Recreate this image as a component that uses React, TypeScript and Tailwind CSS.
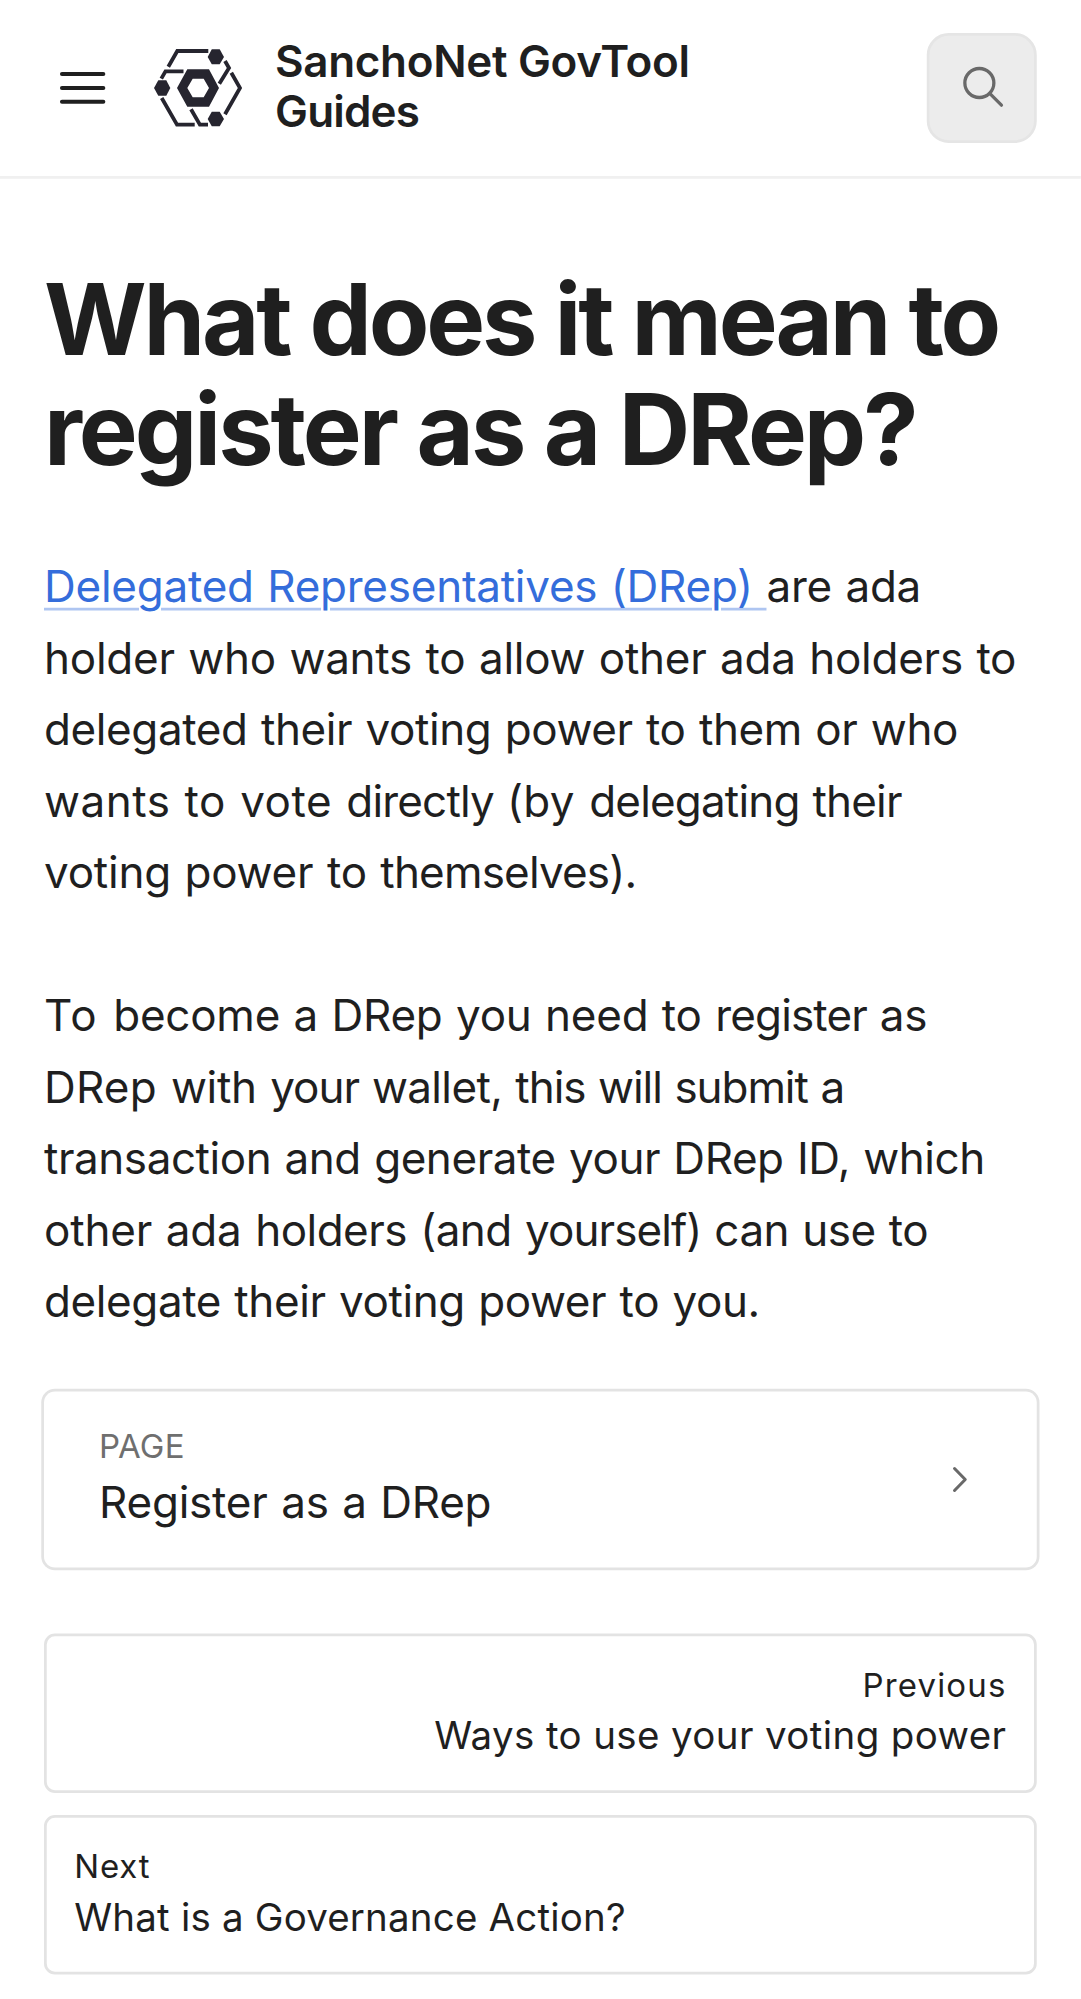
import type { ReactNode } from "react";

function MenuIcon() {
  return (
    <svg className="h-8 w-8" viewBox="0 0 88 88" fill="none" stroke="#1f1f1f" strokeWidth="4.1" strokeLinecap="round">
      <path d="M23.5 30H64.8M23.5 44H64.8M23.5 57.7H64.8" />
    </svg>
  );
}

function Logo() {
  return (
    <svg className="h-8 w-8" viewBox="0 0 88 88">
      <g fill="none" stroke="#26252f" strokeWidth="3.8">
        <path d="M14.3 22.7 23.3 7H54.3" />
        <path d="M7.3 34.6 11.5 27.3H29.5" />
        <path d="M7.7 54 23 80.7H40.7" />
        <path d="M37 65.3 45.9 80.7H54" />
        <path d="M77.3 28.7 86 44 71 70.3" />
        <path d="M71 17 75 24 65.3 39.7" />
      </g>
      <g fill="#26252f">
        <path fillRule="evenodd" d="M23 44 33.3 25.3H55L65 44 55 62.7H33.3ZM33.3 44 38.7 53.3H49.7L55 44 49.7 34.7H38.7Z" />
        <path d="M0 44 4.3 36.3H12.3L16.3 44 12.3 51.7H4.3Z" />
        <path d="M53.7 13 57.8 5.3H65.7L70 13 65.7 20.3H57.8Z" />
        <path d="M53.7 75 57.8 67.7H65.7L70 75 65.7 82.3H57.8Z" />
      </g>
    </svg>
  );
}

function SearchIcon() {
  return (
    <svg className="size-4" viewBox="0 0 44 44" fill="none" stroke="#696969" strokeWidth="3.3" strokeLinecap="round">
      <circle cx="19.6" cy="17" r="14.5" />
      <path d="M30.2 27.6 41.7 39.2" />
    </svg>
  );
}

function Line({ className, children }: { className: string; children: ReactNode }) {
  return <span className={"block " + className}>{children}</span>;
}

function Paragraph({ children }: { children: ReactNode }) {
  return <p className="text-base leading-[26px] whitespace-nowrap [word-spacing:0.5px]">{children}</p>;
}

export default function App() {
  return (
    <div className="h-[1999px] w-[1081px] overflow-hidden bg-white">
      <div className="w-[393px] origin-top-left scale-[2.75] font-['Inter',sans-serif] text-[#1f1f1f]">
        <header className="flex h-[65px] items-center border-b border-[#f0f0f0] px-[14px] pr-4">
          <MenuIcon />
          <div className="ml-2.5 flex flex-1 items-center gap-3">
            <Logo />
            <div className="pb-[1.8px] text-base leading-[18px] font-semibold">
              <Line className="tracking-[-0.12px]">SanchoNet GovTool</Line>
              <Line className="tracking-[-0.3px]">Guides</Line>
            </div>
          </div>
          <button className="flex size-10 items-center justify-center rounded-lg border border-[#e5e5e5] bg-[#ececec]">
            <SearchIcon />
          </button>
        </header>
        <main className="px-4 pt-[31px]">
          <h1 className="text-4xl font-bold whitespace-nowrap">
            <Line className="tracking-[-1.16px]">What does it mean to</Line>
            <Line className="tracking-[-1.1px]">register as a DRep?</Line>
          </h1>
          <div className="mt-6 flex flex-col gap-[26px]">
            <Paragraph>
              <Line className="tracking-[-0.09px]">
                <a className="text-[#346ddb] underline decoration-[#346ddb]/40 decoration-1 underline-offset-2">
                  Delegated Representatives (DRep){" "}
                </a>
                are ada
              </Line>
              <Line className="tracking-[-0.09px]">holder who wants to allow other ada holders to</Line>
              <Line className="tracking-[-0.146px]">delegated their voting power to them or who</Line>
              <Line className="tracking-[-0.3px]">
                <span className="tracking-[0.18px]">wants to vote </span>directly{" "}
                <span className="tracking-[0.15px]">(by </span>delegating their
              </Line>
              <Line className="tracking-[-0.3px]">
                <span className="tracking-[-0.08px]">voting power to </span>themselves).
              </Line>
            </Paragraph>
            <Paragraph>
              <Line className="tracking-[-0.09px]">
                <span className="tracking-[0.5px]">To </span>become a DRep you need to{" "}
                <span className="tracking-[-0.31px]">register </span>as
              </Line>
              <Line className="tracking-[-0.39px]">
                <span className="tracking-[0.08px]">DRep </span>
                <span className="tracking-[-0.11px]">with </span>
                <span className="tracking-[-0.36px]">your </span>
                <span className="tracking-[-0.23px]">wallet, </span>this will submit a
              </Line>
              <Line className="tracking-[-0.163px]">transaction and generate your DRep ID, which</Line>
              <Line className="tracking-[-0.195px]">
                <span className="tracking-[-0.06px]">other ada </span>holders (and{" "}
                <span className="tracking-[-0.33px]">yourself) </span>can use to
              </Line>
              <Line className="tracking-[-0.145px]">delegate their voting power to you.</Line>
            </Paragraph>
          </div>
          <a className="mt-5 flex items-center justify-between rounded px-5 py-3 ring-1 ring-[#e3e3e3]">
            <span className="flex flex-col">
              <span className="text-xs tracking-[0.1px] text-[#6f6f6f]">PAGE</span>
              <span className="text-base tracking-[-0.08px] [word-spacing:0.5px]">Register as a DRep</span>
            </span>
            <svg className="size-4" viewBox="0 0 16 16" fill="none" stroke="#696969" strokeWidth="1.1" strokeLinecap="round" strokeLinejoin="round">
              <path d="M6.1 4 10 8 6.1 12" />
            </svg>
          </a>
          <nav className="mt-6 flex flex-col gap-2">
            <a className="flex flex-col rounded border border-[#e3e3e3] p-2.5 text-right">
              <span className="text-xs tracking-[0.42px]">Previous</span>
              <span className="text-sm tracking-[0.14px]">Ways to use your voting power</span>
            </a>
            <a className="flex flex-col rounded border border-[#e3e3e3] p-2.5">
              <span className="text-xs tracking-[0.29px]">Next</span>
              <span className="text-sm tracking-[0.066px]">What is a Governance Action?</span>
            </a>
          </nav>
        </main>
      </div>
    </div>
  );
}
